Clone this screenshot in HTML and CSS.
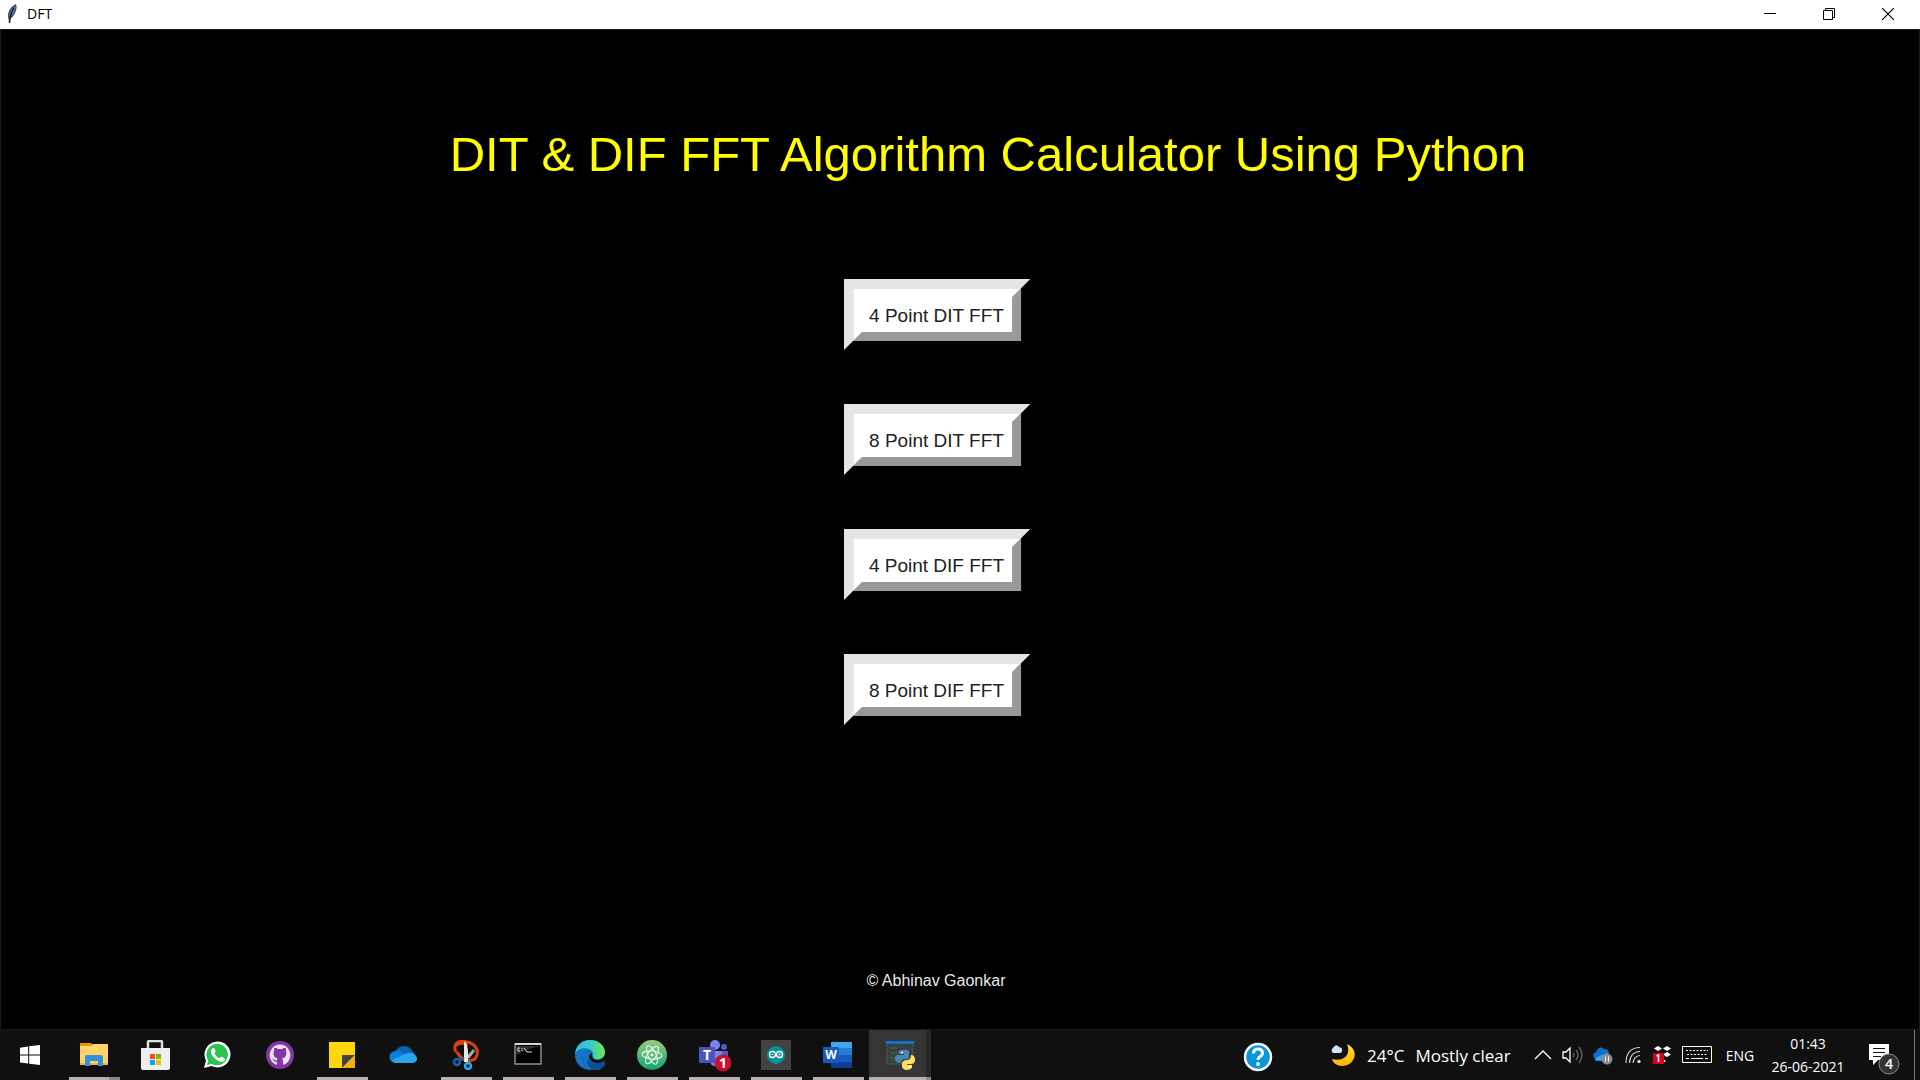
FILE: index.html
```html
<!DOCTYPE html>
<html lang="en">
<head>
<meta charset="utf-8">
<title>DFT</title>
<link rel="stylesheet" href="styles.css">
</head>
<body>
<div class="screen">
  <header class="titlebar">
    <svg class="feather" width="14" height="20" viewBox="0 0 14 20"><path d="M4 19 3.500 15C2 10 4 3 11 0c2 4-1 12-6 15z" fill="#4a4f58"/><path d="M4.500 13C4 9 6 5 10 2c1 4-2 9-5 11z" fill="#4b86d0"/><path d="M4.500 19C5 12 6 8 9 4" stroke="#10203c" stroke-width="1.500" fill="none"/></svg>
    <span class="caption">DFT</span>
    <div class="controls">
      <button class="control" aria-label="Minimize"><svg width="12" height="12"><path d="M0 5.500h12" stroke="#000"/></svg></button>
      <button class="control" aria-label="Restore"><svg width="12" height="12" fill="none" stroke="#000"><path d="M.5 2.500h9v9h-9zM2.500 2V.5h9v9H10"/></svg></button>
      <button class="control" aria-label="Close"><svg width="12" height="12"><path d="M0 0 12 12M12 0 0 12" stroke="#000" stroke-width="1.200"/></svg></button>
    </div>
  </header>

  <main class="window">
    <h1 class="heading">DIT &amp; DIF FFT Algorithm Calculator Using Python</h1>
    <div class="menu">
      <button class="raised">4 Point DIT FFT</button>
      <button class="raised">8 Point DIT FFT</button>
      <button class="raised">4 Point DIF FFT</button>
      <button class="raised">8 Point DIF FFT</button>
    </div>
    <p class="credit">© Abhinav Gaonkar</p>
  </main>

  <footer class="taskbar">
    <button class="start" aria-label="Start"><svg width="20" height="20" fill="#fff"><path d="M0 2.800 8.200 1.500V9.500H0zM9.200 1.300 20 0v9.500H9.200zM0 10.500h8.200v8L0 17.400zM9.200 10.500H20V20L9.200 18.700z"/></svg></button>
    <nav class="apps">
      <button class="app open stacked" aria-label="File Explorer"><svg width="30" height="30"><path d="M1 3h11l2 2h-1v3H1z" fill="#e09a07"/><path d="M1 6h11l2-2h15v21H1z" fill="#ffd366"/><path d="M1 23h28v2H1z" fill="#e9b64a"/><path d="M6 26V17q0-2 2-2h14q2 0 2 2v9h-5v-5h-8v5z" fill="#3490dc"/></svg></button>
      <button class="app" aria-label="Microsoft Store"><svg width="30" height="30"><path d="M7 9V2q0-1 1-1h12q1 0 1 1v7" fill="none" stroke="#ddd" stroke-width="2.500"/><path d="M0 8h29v20q0 2-2 2H2q-2 0-2-2z" fill="#efefef"/><path d="M9 14h5v5H9z" fill="#f04e22"/><path d="M15 14h5v5h-5z" fill="#7fba00"/><path d="M9 20h5v5H9z" fill="#00a4ef"/><path d="M15 20h5v5h-5z" fill="#ffb900"/></svg></button>
      <button class="app" aria-label="WhatsApp"><svg width="30" height="30"><path d="m1 28 2-7.500A13 13 0 1 1 8.500 26z" fill="#fff"/><path d="m4 25 1.200-4.500A10.700 10.700 0 1 1 9 24z" fill="#28c44e"/><path d="M10 8c-4 2-2 7 2 10.500s8 4.500 9.500 2c1-2 .5-2-2.500-3.500-1.500-.7-1.500 1.500-2.700 1.300-2-.8-4-2.800-4.800-4.800 0-.8 1.500-1.500 1-2.500C11.500 8 11 7.500 10 8z" fill="#fff"/></svg></button>
      <button class="app" aria-label="GitHub Desktop"><svg width="30" height="30"><circle cx="15" cy="15" r="14" fill="#8435a6"/><path d="M15 4.500a10.500 10.500 0 0 0-5 19.700l2 .6v-3c-2.500.5-3.500-1-4-2.200l-1-1c1.500-.5 2.500 2 4 2 .6 0 1-.1 1.300-.3.100-1 .4-1.500.8-2C9 17.500 8.500 15 9 11.500l.2-3.500c1.200-.1 2.500.6 3.300 1.200q2.500-.6 5 0c.9-.6 2.200-1.300 3.300-1.200l.3 3.500c.5 3.500 0 6-4.200 6.800.8.700 1.100 1.700 1.100 2.800v3.700l2-.6A10.500 10.500 0 0 0 15 4.500z" fill="#ebe3f0"/><path d="M10 8q2 0 3 1.200h4Q18 8 20 8l1 3q1 7-4.500 7.300.9 1 .9 3v6h-5v-9C8 17.500 8 13 9.400 11z" fill="#8435a6"/></svg></button>
      <button class="app open" aria-label="Sticky Notes"><svg width="30" height="30"><path d="M2 2h26v26H2z" fill="#ffd60a"/><path d="M15 15h13L15 28z" fill="#444"/><path d="M28 15v13H15z" fill="#f2ae13"/></svg></button>
      <button class="app" aria-label="OneDrive"><svg width="30" height="30"><path d="M5 14Q8 6 15 6q7 0 10 8l-8 6z" fill="#0a63b8"/><path d="M7 23a6 6 0 0 1-1-12q3-1 6 1l12 8z" fill="#0b80d8"/><path d="M7 23q-3 0-4-3l15-7q7-1 9 3c3 4-1 7-3 7z" fill="#2aa5ec"/></svg></button>
      <button class="app open" aria-label="Snipping Tool"><svg width="30" height="30" fill="none"><path d="M5 12C1 3 8 0 16 2c10 2 13 11 8 17l-5 2q-9-1-13-9" stroke="#d93f0f" stroke-width="3"/><path d="M5 3q7-4 12-1v4Q10 3 5 7z" fill="#d93f0f"/><path d="m16 16 6-7 2 2-6 8z" fill="#aaa"/><path d="M14 1q4 5 3 21h-4V3z" fill="#e6e6e6"/><circle cx="6" cy="22" r="3" stroke="#1263b5" stroke-width="2.500"/><path d="m9 20 4-2" stroke="#1263b5" stroke-width="2"/><circle cx="17" cy="26" r="3" stroke="#28a8ea" stroke-width="2.500"/></svg></button>
      <button class="app open" aria-label="Command Prompt"><svg width="30" height="30"><path d="M2 4h26v20H2z" fill="#000" stroke="#888d92" stroke-width="1.500"/><path d="M2 4h26" stroke="#d3d8de" stroke-width="2"/><path d="M3 6h24Q14 9 3 15z" fill="#303030"/><path d="M7 8H5v3h2M9 8v1M9 10v1M11 8l3 4M14 12h5" stroke="#ddd" fill="none"/></svg></button>
      <button class="app open" aria-label="Microsoft Edge"><svg width="30" height="30"><defs><linearGradient id="sky"><stop stop-color="#35b8e8"/><stop offset=".6" stop-color="#3ccfb5"/><stop offset="1" stop-color="#75e64d"/></linearGradient></defs><circle cx="15" cy="15" r="15" fill="#1275c8"/><path d="M0 14C1 5 7 0 15 0c9 0 15 6 15 12 0 7-8 9-12 6-2-1 0-2 0-4 0-6-13-9-18 0z" fill="url(#sky)"/><path d="M18 13c-5-4-11 2-9 9 1 5 6 8 10 8-10-1-14-9-9-16 3-4 7-3 8-1z" fill="#0f5ba8"/><path d="M13 14q-2 5 3 8t12-1l2-7 2 9-8 8q-10-1-12-8z" fill="#104e93"/><path d="M18 18c2 3 9 3 12-3v6q-9 4-14 0-4-4 0-8 1 0 1 2z" fill="#101010"/></svg></button>
      <button class="app open" aria-label="Atom"><svg width="30" height="30"><defs><linearGradient id="leaf" x2="0" y2="1"><stop stop-color="#99cc80"/><stop offset="1" stop-color="#12a376"/></linearGradient></defs><circle cx="15" cy="15" r="15" fill="url(#leaf)"/><g fill="none" stroke="#e4f8e7" stroke-width="1.200"><ellipse cx="15" cy="15" rx="4" ry="10" transform="rotate(-25 15 15)"/><ellipse cx="15" cy="15" rx="4" ry="10" transform="rotate(35 15 15)"/><ellipse cx="15" cy="15" rx="4" ry="10" transform="rotate(95 15 15)"/></g><circle cx="15" cy="15" r="1.500" fill="#fff"/></svg></button>
      <button class="app open" aria-label="Microsoft Teams"><svg width="34" height="34"><circle cx="18" cy="7" r="5" fill="#7b83eb"/><circle cx="27" cy="9" r="3" fill="#5059c9"/><path d="M13 13h12v9q-2 7-8 6-4-1-4-5z" fill="#7b83eb"/><path d="M25 13h6v8h-6z" fill="#5059c9"/><rect x="2" y="9" width="16" height="16" rx="1" fill="#4b53bc"/><text x="10" y="22" class="glyph">T</text><circle cx="26" cy="25" r="8.500" fill="#c8102e"/><text x="26" y="30" class="glyph">1</text></svg></button>
      <button class="app open" aria-label="Arduino"><svg width="30" height="30"><path d="M0 0h30v30H0z" fill="#424242"/><circle cx="15" cy="15" r="9" fill="#009297"/><g fill="none" stroke="#fff" stroke-width="1.300"><circle cx="11.500" cy="14.500" r="3"/><circle cx="18.500" cy="14.500" r="3"/><path d="M10.500 14.500h2M17.500 14.500h2M18.500 13.500v2" stroke-width=".8"/></g></svg></button>
      <button class="app open" aria-label="Word"><svg width="30" height="30"><path d="M8 2h21v7H8z" fill="#41a5ee"/><path d="M8 8h21v7H8z" fill="#2b7cd3"/><path d="M8 15h21v7H8z" fill="#185abd"/><path d="M8 22h21v6H8z" fill="#103f91"/><rect y="7" width="16" height="16" rx="1" fill="#185abd"/><text x="8" y="19" class="glyph small">W</text></svg></button>
      <button class="app open stacked active" aria-label="Python"><svg width="30" height="30"><path d="M2 2h26v22H2z" fill="#393e40" stroke="#555"/><path d="M1 1h28v3H1z" fill="#1173c6"/><path d="M5 8h7M5 13h10M5 18h6" stroke="#367b35"/><path d="M18 10q6-1 6 2v5q0 2-4 2-4 0-4 4-6 0-6-4 0-5 4-4h5v-1h-5v-3q0-1 4-1z" fill="#4686b9"/><path d="M26 15q4 0 4 5 0 4-4 4h-4v1h5v3q-2 2-6 2-4-1-4-4v-3q1-3 5-3 4 0 4-5z" fill="#ffdf58"/><circle cx="17" cy="12.500" r="1" fill="#fff"/><circle cx="24.500" cy="27" r="1" fill="#fff"/></svg></button>
    </nav>

    <div class="tray">
      <button class="help" aria-label="Help"><svg width="30" height="30"><circle cx="15" cy="15" r="13" fill="#0796db" stroke="#fff" stroke-width="2.500"/><path d="M10.500 11.500q0-4.500 4.500-4.500t4.500 4q0 2.500-3 4-1.500 1-1.500 3" fill="none" stroke="#fff" stroke-width="3"/><circle cx="15" cy="22" r="1.900" fill="#fff"/></svg></button>
      <button class="weather"><svg width="26" height="24"><defs><linearGradient id="moon" x2="0" y2="1"><stop stop-color="#ffe52c"/><stop offset="1" stop-color="#ffb00a"/></linearGradient></defs><path d="M17 1c14 7 7 22-5 22-5 0-9-3-10-7 10 3 20-3 15-15z" fill="url(#moon)"/><path d="M3 10a3 3 0 0 1 0-5q3-5 6-1 4 1 3 4 0 2-2 2z" fill="#cce7f7"/></svg><span>24°C</span><span>Mostly clear</span></button>
      <button class="slot" aria-label="Show hidden icons"><svg width="18" height="10"><path d="m1 9 8-8 8 8" fill="none" stroke="#fff" stroke-width="1.300"/></svg></button>
      <button class="slot" aria-label="Volume"><svg width="22" height="20" fill="none" stroke="#fff" stroke-width="1.300"><path d="M1 7h3l4-4v14l-4-4H1z"/><g stroke="#666"><path d="M11 8q2 2 0 4M14 5q4 5 0 10M17 2q6 8 0 16"/></g></svg></button>
      <button class="slot" aria-label="OneDrive paused"><svg width="22" height="20"><path d="M3 14Q-1 9 4 7 7 0 12 4q6 0 5 7l-5 5H4z" fill="#0c70ce"/><path d="M3 15q0-3 12-7l3 5-6 3z" fill="#35aaf0"/><circle cx="15" cy="14" r="5.500" fill="#8b8b8b"/><path d="M13.500 11.500v5M16.500 11.500v5" stroke="#fff"/></svg></button>
      <button class="slot" aria-label="Network"><svg width="16" height="18" fill="none" stroke="#ccc" stroke-width="1.200"><path d="M1 17Q1 2 15 1.500M4.500 17Q5 6 15 5.500M8 17q1-7 7-7.500"/><circle cx="14" cy="15.500" r="1.600" fill="#fff" stroke="none"/></svg></button>
      <button class="slot slim" aria-label="Dropbox"><svg width="20" height="20"><path d="m6 1 4 2.500L6 6 2 3.500zM15 1l4 2.500L15 6l-4-2.500zM15 7l4 2.500-4 2.500-4-2.500zM11 14l3 2-3 2z" fill="#fff"/><rect x="1" y="8" width="11" height="11" rx="1" fill="#d9001b"/><path d="m4.500 11 2-1v7" stroke="#fff" stroke-width="1.600" fill="none"/></svg></button>
      <button class="slot wide" aria-label="Touch keyboard"><svg width="30" height="18" fill="none" stroke="#fff"><path d="M.5.5h29v16H.5z"/><path d="M4 4.500h22M5 8.500h21" stroke-dasharray="2 1.500"/><path d="M4 12.500h3M9 12.500h12M23 12.500h3"/></svg></button>
      <button class="language">ENG</button>
      <button class="clock"><span>01:43</span><span>26-06-2021</span></button>
      <button class="notices" aria-label="Notifications"><svg width="32" height="32"><path d="M1 1h20v16H10l-5 5v-5H1z" fill="#fff"/><path d="M5 5.500h12M5 9.500h12M5 13.500h8" stroke="#111"/><circle cx="21" cy="21" r="10" fill="#333" stroke="#888"/><text x="21" y="26" class="glyph count">4</text></svg></button>
      <button class="desktop" aria-label="Show desktop"></button>
    </div>
  </footer>
</div>
</body>
</html>
```
FILE: styles.css
```css
* {
  box-sizing: border-box;
}

body {
  margin: 0;
  background: #000;
  font-family: "Open Sans", "Noto Sans", sans-serif;
}

button {
  display: flex;
  align-items: center;
  justify-content: center;
  padding: 0;
  border: 0;
  background: none;
  color: #fff;
  font: inherit;
  white-space: nowrap;
}

svg {
  flex: none;
}

.screen {
  display: flex;
  flex-direction: column;
  min-height: 100vh;
}

.titlebar {
  display: flex;
  align-items: center;
  height: 29px;
  padding: 0 3px 1px 5px;
  background: #fff;
  color: #000;
}

.caption {
  margin-left: 8px;
  font-size: 14px;
  line-height: 20px;
}

.controls {
  display: flex;
  gap: 1px;
  height: 100%;
  margin-left: auto;
}

.control {
  width: 58px;
}

.window {
  display: flex;
  flex: 1;
  flex-direction: column;
  align-items: center;
  padding: 96px 0 38px;
  border: 1px solid #1a1d1d;
  border-bottom: 0;
  font-family: "Liberation Sans", Arial, sans-serif;
}

.heading {
  margin: 0 0 97px 56px;
  color: #ff0;
  font-size: 49px;
  font-weight: 400;
  line-height: 56px;
}

.menu {
  display: grid;
  gap: 54px;
  margin: 0 46px 54px 0;
}

.raised {
  position: relative;
  height: 71px;
  padding: 2px 26px 0 25px;
  background: #fff;
  clip-path: polygon(0 0, 100% 0, calc(100% - 9px) 9px, calc(100% - 9px) calc(100% - 9px), 9px calc(100% - 9px), 0 100%);
  color: #222;
  font-size: 19px;
  line-height: 22px;
}

.raised::before,
.raised::after {
  position: absolute;
  inset: 0;
  content: "";
}

.raised::before {
  background: #e5e5e5;
  clip-path: polygon(0 0, 100% 0, calc(100% - 10px) 10px, 10px 10px, 10px calc(100% - 10px), 0 100%);
}

.raised::after {
  background: #999;
  clip-path: polygon(calc(100% - 9px) 9px, calc(100% - 9px) calc(100% - 9px), 9px calc(100% - 9px), 18px calc(100% - 18px), calc(100% - 18px) calc(100% - 18px), calc(100% - 18px) 18px);
}

.credit {
  margin: auto 48px 0 0;
  color: #e8e8e8;
  font-size: 16px;
  line-height: 20px;
}

.taskbar {
  display: flex;
  height: 51px;
  border-top: 1px solid #1c1c1c;
  background: #101010;
}

.start {
  width: 63px;
  padding-right: 3px;
}

.apps {
  display: flex;
}

.app {
  position: relative;
  width: 62px;
}

.open::after {
  position: absolute;
  right: 5px;
  bottom: 0;
  left: 6px;
  height: 3px;
  background: #b5b0b3;
  content: "";
}

.stacked::after {
  background: linear-gradient(to left, #8c888b 11px, #b5b0b3 11px);
}

.active {
  background: linear-gradient(to left, #292929 5px, #353535 5px);
}

.active::after {
  right: 0;
  left: 0;
  background: linear-gradient(to left, #8c888b 5px, #b5b0b3 5px);
}

.glyph {
  fill: #fff;
  font-size: 14px;
  font-weight: 700;
  text-anchor: middle;
}

.small {
  font-size: 12px;
}

.count {
  font-weight: 600;
}

.tray {
  display: flex;
  margin-left: auto;
  font-size: 17px;
}

.help {
  width: 60px;
  padding-top: 4px;
}

.weather {
  justify-content: flex-start;
  gap: 11px;
  width: 198px;
  margin-left: 42px;
}

.slot {
  width: 30px;
}

.slim {
  width: 28px;
}

.wide {
  width: 42px;
}

.language {
  width: 44px;
  font-size: 14px;
}

.clock {
  flex-direction: column;
  width: 92px;
  font-size: 14px;
  line-height: 23px;
}

.notices {
  width: 60px;
  padding-top: 8px;
}

.desktop {
  width: 6px;
  border-left: 1px solid #777;
}
```
